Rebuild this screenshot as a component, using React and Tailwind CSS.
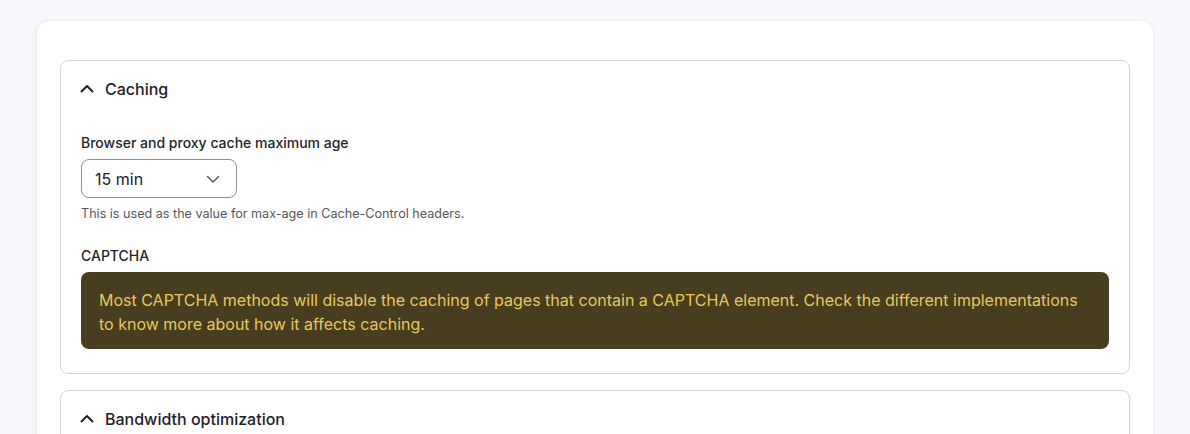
import React from "react";

const font = { fontFamily: "Inter, 'Noto Sans', sans-serif" };

function ChevronUp() {
  return (
    <svg width="16" height="16" viewBox="0 0 16 16" fill="none" className="shrink-0">
      <path d="M2.5 10.5 8 5l5.5 5.5" stroke="#1f2029" strokeWidth="2" strokeLinecap="round" strokeLinejoin="round" />
    </svg>
  );
}

function ChevronDown() {
  return (
    <svg width="14" height="14" viewBox="0 0 14 14" fill="none">
      <path d="M1.5 4.5 7 10l5.5-5.5" stroke="#55575e" strokeWidth="1.5" strokeLinecap="round" strokeLinejoin="round" />
    </svg>
  );
}

function Section({ title, children }) {
  return (
    <div className="rounded-lg border border-[#d3d4d8] bg-white">
      <div className="flex items-center gap-[10px] pl-[18px] h-[56px]">
        <ChevronUp />
        <span className="text-[16px] leading-6 font-medium text-[#1f2029]">{title}</span>
      </div>
      {children}
    </div>
  );
}

export default function App() {
  return (
    <div style={font} className="min-h-[434px] bg-[#f7f8fc] overflow-hidden px-9 pb-10">
      <div className="h-[10px] -mt-[14px] rounded-xl bg-white shadow-[0_2px_6px_rgba(30,40,80,0.06)]" />
      <div className="mt-[24px] rounded-xl bg-white border border-[#eceef3] shadow-[0_1px_4px_rgba(30,40,80,0.05)] px-[23px] pt-[39px] pb-6">
        <Section title="Caching">
          <div className="px-5 pb-6 pt-[16px]">
            <label className="block text-[14px] leading-5 font-medium text-[#232429]">
              Browser and proxy cache maximum age
            </label>
            <div className="mt-[6px] flex items-center justify-between w-[156px] h-[39px] rounded-lg border border-[#8e9099] pl-[13px] pr-[16px]">
              <span className="text-[16px] text-[#1f2029]">15 min</span>
              <ChevronDown />
            </div>
            <p className="mt-[8px] text-[12.6px] leading-4 text-[#55575e]">
              This is used as the value for max-age in Cache-Control headers.
            </p>
            <div className="mt-[24px] text-[14px] leading-5 font-medium text-[#232429]">CAPTCHA</div>
            <div className="mt-[6px] rounded-lg bg-[#483d1f] text-[#e8c75a] text-[16px] leading-6 pl-[18px] pr-6 pt-4 pb-[13px]">
              Most CAPTCHA methods will disable the caching of pages that contain a CAPTCHA element. Check the different implementations to know more about how it affects caching.
            </div>
          </div>
        </Section>
        <div className="mt-4">
          <Section title="Bandwidth optimization">
            <div className="h-24" />
          </Section>
        </div>
      </div>
    </div>
  );
}
